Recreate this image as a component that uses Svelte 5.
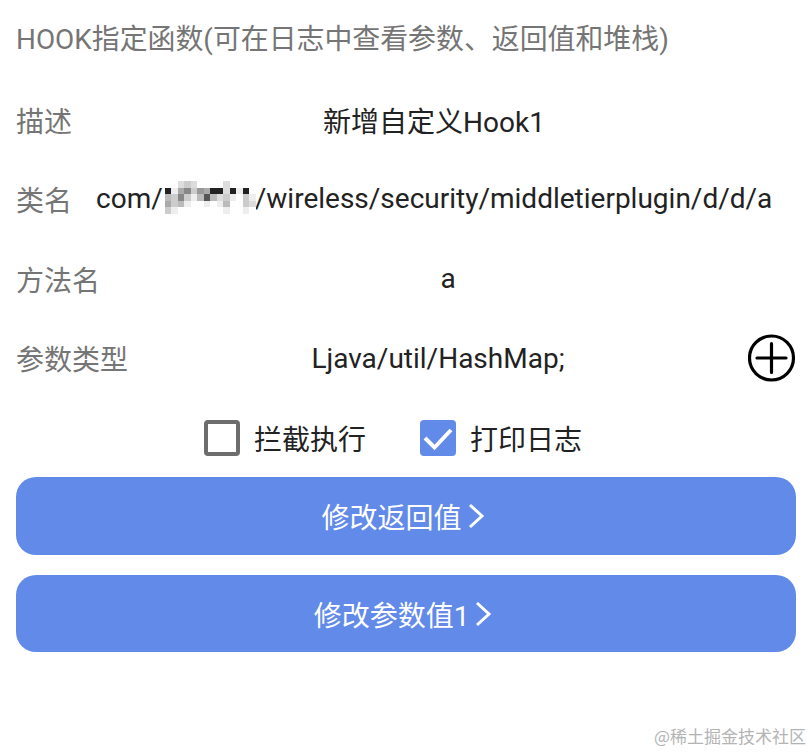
<script>
  // mosaic over the censored package name, 5 rows of 14 cells
  const mosaic = [
    '#fff #fff #ddd #ccc #ddd #fff #fff #fff #fff #ddd #fff #fff #fff #fff',
    '#222 #eee #aaa #888 #ccc #999 #aaa #222 #222 #ddd #222 #eee #222 #fff',
    '#bbb #ccc #888 #ccc #eee #bbb #555 #bbb #ddd #ccc #eee #fff #ccc #eee',
    '#aaa #ccc #bbb #eee #fff #fff #eee #fff #eee #bbb #fff #fff #ccc #ddd',
    '#ccc #eee #fff #fff #fff #fff #fff #fff #fff #eee #fff #fff #eee #fff'
  ].map((r) => r.split(' '));

  const rows = [
    { label: '描述', value: '新增自定义Hook1' },
    { label: '方法名', value: 'a' }
  ];
</script>

<div class="page">
  <div class="title">HOOK指定函数(可在日志中查看参数、返回值和堆栈)</div>

  <div class="row">
    <span class="label">{rows[0].label}</span>
    <span class="value">{rows[0].value}</span>
  </div>

  <div class="row">
    <span class="label">类名</span>
    <span class="value classname">com/<span class="mosaic">
      {#each mosaic as line}
        {#each line as c}
          <i style="background:{c}"></i>
        {/each}
      {/each}
    </span>/wireless/security/middletierplugin/d/d/a</span>
  </div>

  <div class="row">
    <span class="label">{rows[1].label}</span>
    <span class="value">{rows[1].value}</span>
  </div>

  <div class="row">
    <span class="label">参数类型</span>
    <span class="value">Ljava/util/HashMap;</span>
    <svg class="plus" width="48" height="48" viewBox="0 0 48 48" fill="none" stroke="#000" stroke-width="3.2" stroke-linecap="round">
      <circle cx="23.5" cy="24" r="22" />
      <path d="M23.5 9.5v29M9 24h29" />
    </svg>
  </div>

  <div class="checks">
    <div class="check">
      <span class="box"></span>
      <span>拦截执行</span>
    </div>
    <div class="check">
      <svg width="36" height="36" viewBox="0 0 36 36">
        <rect width="36" height="36" rx="4" fill="#618ae9" />
        <path d="M5 18l9.5 9.5L31 10" fill="none" stroke="#fff" stroke-width="4" />
      </svg>
      <span>打印日志</span>
    </div>
  </div>

  <button class="btn first">修改返回值
    <svg width="18" height="26" viewBox="0 0 18 26" fill="none" stroke="#fff" stroke-width="3"><path d="M3 2l12 11L3 24" /></svg>
  </button>
  <button class="btn second">修改参数值1
    <svg width="18" height="26" viewBox="0 0 18 26" fill="none" stroke="#fff" stroke-width="3"><path d="M3 2l12 11L3 24" /></svg>
  </button>

  <div class="watermark">@稀土掘金技术社区</div>
</div>

<style>
  :global(body) {
    margin: 0;
    background: #fff;
  }

  .page {
    position: relative;
    box-sizing: border-box;
    width: 812px;
    height: 752px;
    padding: 0 16px;
    font-family: Roboto, "Noto Sans CJK SC", sans-serif;
    font-size: 28px;
    color: #222;
    overflow: hidden;
  }

  .title {
    height: 80px;
    line-height: 80px;
    font-size: 27.9px;
    color: #757575;
    white-space: nowrap;
  }

  .row {
    display: flex;
    align-items: center;
    height: 79.5px;
  }

  .label {
    color: #757575;
    white-space: nowrap;
  }

  .value {
    flex: 1;
    text-align: center;
    white-space: nowrap;
  }

  .classname {
    padding-left: 24px;
    text-align: left;
  }

  .mosaic {
    display: inline-grid;
    grid-template-columns: repeat(14, 6.5px);
    grid-auto-rows: 6.5px;
    vertical-align: middle;
    margin: -3px -1px 3px 2px;
    filter: blur(0.6px);
  }

  .mosaic i {
    display: block;
  }

  .plus {
    flex: none;
  }

  .checks {
    display: flex;
    justify-content: center;
    gap: 54px;
    height: 79px;
    align-items: center;
    margin-left: -26px;
  }

  .check {
    display: flex;
    align-items: center;
    gap: 14px;
  }

  .box {
    box-sizing: border-box;
    width: 36px;
    height: 36px;
    border: 4px solid #6d6d6d;
    border-radius: 4px;
  }

  .btn {
    display: flex;
    align-items: center;
    justify-content: center;
    gap: 5px;
    width: 100%;
    height: 78px;
    border: none;
    border-radius: 20px;
    background: #618ae9;
    color: #fff;
    font: inherit;
    padding: 0 6px 0 0;
  }

  .btn.first {
    margin-bottom: 20px;
  }

  .btn.second {
    height: 77px;
  }

  .watermark {
    position: absolute;
    right: 6px;
    bottom: 4px;
    font-size: 17px;
    color: #b4b4b4;
    font-family: "Noto Sans CJK SC", sans-serif;
  }
</style>
